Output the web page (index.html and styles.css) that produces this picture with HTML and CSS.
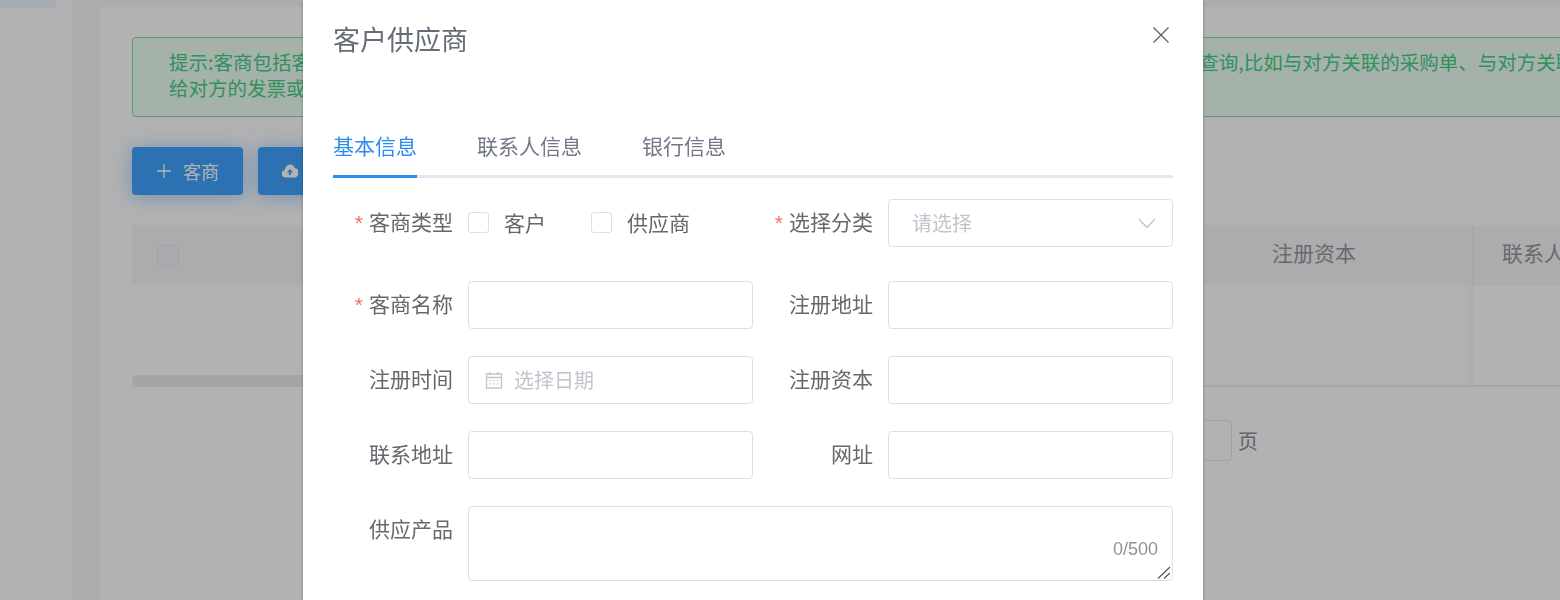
FILE: index.html
```html
<!DOCTYPE html>
<html lang="zh-CN">
<head>
<meta charset="utf-8">
<title>客户供应商</title>
<link rel="stylesheet" href="styles.css">
</head>
<body>
<div class="page">
  <aside class="sidebar"><div class="menu-active"></div></aside>
  <div class="gutter"></div>
  <main class="main">
    <div class="topband"></div>
    <div class="content">
      <div class="alert">
        <div class="alert-line">提示:客商包括客户和供应商,客商的基本信息和联系人信息都可以在这里维护,与客商相关联的其他各类业务数据信息可以查询,比如与对方关联的采购单、与对方关联的销售单</div>
        <div class="alert-line">给对方的发票或收到的发票</div>
      </div>
      <div class="toolbar">
        <button class="btn" type="button">
          <svg class="btn-plus" viewBox="0 0 16 16"><path d="M8 1v14M1 8h14"/></svg>
          <span>客商</span>
        </button>
        <button class="btn btn-upload" type="button">
          <svg class="btn-cloud" viewBox="0 0 16 14"><path fill-rule="evenodd" d="M8 0.5a4.8 4.8 0 0 1 4.6 3.6A4.6 4.6 0 0 1 12 13.4H3.8A3.7 3.7 0 0 1 3.1 6 4.9 4.9 0 0 1 8 0.5zM8 5 4.9 8.4H7V11h2V8.4h2.1z"/></svg>
          <span>导入客商</span>
        </button>
      </div>
      <div class="table">
        <div class="table-head">
          <div class="cell-check"><span class="box box-head"></span></div>
          <div class="cell-capital">注册资本</div>
          <div class="cell-contact">联系人</div>
        </div>
        <div class="table-body">
          <div class="body-fill"><div class="scrollbar"></div></div>
          <div class="body-capital"></div>
          <div class="body-contact"></div>
        </div>
      </div>
      <div class="pager">
        <span class="pager-box"></span>
        <span class="pager-text">页</span>
      </div>
    </div>
  </main>
</div>

<div class="overlay">
  <section class="dialog">
    <header class="dialog-head">
      <h2 class="dialog-title">客户供应商</h2>
      <svg class="dialog-close" viewBox="0 0 16 16"><path d="M0.5 0.5l15 15M15.5 0.5l-15 15"/></svg>
    </header>
    <nav class="tabs">
      <span class="tab tab-active">基本信息</span>
      <span class="tab">联系人信息</span>
      <span class="tab">银行信息</span>
    </nav>
    <form class="form">
      <div class="field field-first">
        <label class="label"><span class="star">*</span>客商类型</label>
        <div class="checks">
          <span class="check"><span class="box"></span>客户</span>
          <span class="check"><span class="box"></span>供应商</span>
        </div>
      </div>
      <div class="field field-first">
        <label class="label"><span class="star">*</span>选择分类</label>
        <div class="control">
          <input class="input input-select" type="text" placeholder="请选择" readonly>
          <svg class="select-arrow" viewBox="0 0 18 11"><path d="M1 1l8 8.5L17 1"/></svg>
        </div>
      </div>
      <div class="field">
        <label class="label"><span class="star">*</span>客商名称</label>
        <div class="control"><input class="input" type="text"></div>
      </div>
      <div class="field">
        <label class="label">注册地址</label>
        <div class="control"><input class="input" type="text"></div>
      </div>
      <div class="field">
        <label class="label">注册时间</label>
        <div class="control">
          <svg class="date-icon" viewBox="0 0 18 18"><path class="date-line" d="M1.5 3h15v14h-15zM1.5 6.5h15M5 1v3M13 1v3"/><path class="date-dots" d="M4.5 9.5h2M8 9.5h2M11.5 9.5h2M4.5 13h2M8 13h2M11.5 13h2"/></svg>
          <input class="input input-date" type="text" placeholder="选择日期">
        </div>
      </div>
      <div class="field">
        <label class="label">注册资本</label>
        <div class="control"><input class="input" type="text"></div>
      </div>
      <div class="field">
        <label class="label">联系地址</label>
        <div class="control"><input class="input" type="text"></div>
      </div>
      <div class="field">
        <label class="label">网址</label>
        <div class="control"><input class="input" type="text"></div>
      </div>
      <div class="field field-wide">
        <label class="label">供应产品</label>
        <div class="control">
          <textarea class="textarea"></textarea>
          <span class="counter">0/500</span>
          <svg class="grip" viewBox="0 0 14 13"><path d="M1 12.5 13 1M7 12.5 13 7"/></svg>
        </div>
      </div>
    </form>
  </section>
</div>
</body>
</html>
```

FILE: styles.css
```css
* { box-sizing: border-box; }

html, body {
  margin: 0;
  height: 100%;
  overflow: hidden;
  background: #fff;
}

body {
  font-family: "Noto Sans CJK SC", "Liberation Sans", sans-serif;
  color: #606266;
}

.page {
  display: flex;
  height: 600px;
  overflow: hidden;
}

.sidebar {
  flex: 0 0 72px;
  background: #fff;
}

.menu-active {
  width: 56px;
  height: 8px;
  border-radius: 0 0 4px 0;
  background: #ecf5ff;
}

.gutter {
  flex: 0 0 28px;
  background: #f6f6f7;
}

.main {
  flex: 1 1 auto;
  min-width: 0;
  overflow: hidden;
  background: #fff;
}

.topband {
  height: 7px;
  background: #f6f6f7;
}

.content {
  width: 1532px;
  padding: 30px 0 0 32px;
}

.alert {
  height: 80px;
  padding: 11px 36px;
  border: 1px solid #7fdca8;
  border-radius: 4px;
  background: #edfff3;
  color: #46d088;
  font-size: 19.5px;
  line-height: 26px;
}

.alert-line { white-space: nowrap; }

.toolbar {
  display: flex;
  gap: 15px;
  margin-top: 30px;
}

.btn {
  display: flex;
  align-items: center;
  gap: 11px;
  height: 48px;
  padding: 0 24px;
  border: 0;
  border-radius: 4px;
  background: #40a4ff;
  color: #fff;
  font: inherit;
  font-size: 18px;
  box-shadow: 0 2px 20px rgba(64, 158, 255, .5);
}

.btn-upload { width: 200px; }

.btn-plus {
  width: 16px;
  height: 16px;
  fill: none;
  stroke: #fff;
  stroke-width: 1.3;
}

.btn-cloud {
  width: 16px;
  height: 14px;
  fill: #fff;
}

.table {
  width: 1500px;
  margin-top: 30px;
}

.table-head {
  display: flex;
  align-items: center;
  height: 60px;
  background: #f5f6f8;
  font-size: 21px;
  line-height: 54px;
  color: #96989c;
}

.cell-check {
  flex: 1 1 auto;
  display: flex;
  align-items: center;
  padding-left: 25px;
}

.cell-capital {
  flex: 0 0 225px;
  height: 60px;
  padding-left: 25px;
}

.cell-contact {
  flex: 0 0 160px;
  height: 60px;
  padding-left: 29px;
  border-left: 1px solid #eeeff2;
}

.table-body {
  display: flex;
  height: 102px;
  border-bottom: 2px solid #edeef0;
}

.body-fill {
  flex: 1 1 auto;
  position: relative;
}

.scrollbar {
  position: absolute;
  left: 0;
  bottom: -2px;
  width: 400px;
  height: 12px;
  border-radius: 6px;
  background: #ececec;
}

.body-capital { flex: 0 0 225px; }

.body-contact {
  flex: 0 0 160px;
  border-left: 1px solid #f6f6f6;
  box-shadow: -6px 0 5px -2px rgba(0, 0, 0, .03);
}

.pager {
  display: flex;
  align-items: center;
  justify-content: flex-end;
  gap: 6px;
  width: 1500px;
  margin-top: 33px;
  padding-right: 374px;
}

.pager-box {
  width: 80px;
  height: 41px;
  border: 1px solid #e9e9ec;
  border-radius: 4px;
  background: #fff;
}

.pager-text {
  font-size: 20px;
  line-height: 41px;
  color: #8c8e92;
}

.overlay {
  position: fixed;
  inset: 0;
  display: flex;
  padding-left: 303px;
  overflow: hidden;
  background: rgba(0, 0, 0, .3);
}

.dialog {
  flex: 0 0 900px;
  height: 640px;
  padding: 0 30px;
  background: #fff;
  box-shadow: 0 1px 3px rgba(0, 0, 0, .3);
}

.dialog-head {
  position: relative;
  height: 119px;
  padding-top: 19px;
}

.dialog-title {
  margin: 0;
  font-size: 27px;
  font-weight: 400;
  line-height: 40px;
  color: #666d78;
}

.dialog-close {
  position: absolute;
  top: 27px;
  right: 4px;
  width: 16px;
  height: 16px;
  fill: none;
  stroke: #606266;
  stroke-width: 1.3;
}

.tabs {
  display: flex;
  gap: 60px;
  height: 59px;
  border-bottom: 3px solid #e4e7ed;
}

.tab {
  height: 59px;
  font-size: 21px;
  line-height: 52px;
  color: #73788a;
}

.tab-active {
  border-bottom: 3px solid #2d8cf0;
  color: #2d8cf0;
}

.form {
  display: grid;
  grid-template-columns: 420px 420px;
  row-gap: 27px;
  padding-top: 21px;
}

.field {
  display: flex;
  height: 48px;
}

.field-first { margin-bottom: 7px; }

.field-wide {
  grid-column: 1 / 3;
  height: 75px;
}

.label {
  flex: 0 0 120px;
  height: 48px;
  margin-right: 15px;
  text-align: right;
  font-size: 21px;
  line-height: 44px;
  color: #66686d;
}

.star {
  margin-right: 6px;
  color: #f56c6c;
  font-family: "Liberation Sans", sans-serif;
  font-size: 21px;
  line-height: 1;
}

.checks {
  display: flex;
  align-items: center;
  gap: 45px;
  height: 46px;
}

.check {
  display: flex;
  align-items: center;
  gap: 15px;
  font-size: 21px;
  line-height: 30px;
  color: #66686d;
}

.box {
  display: block;
  width: 21px;
  height: 21px;
  border: 1px solid #dcdfe6;
  border-radius: 3px;
  background: #fff;
}

.box-head {
  width: 22px;
  border-color: #eaeaef;
  background: #f4f5fa;
}

.control {
  position: relative;
  flex: 1 1 auto;
  min-width: 0;
}

.input {
  display: block;
  width: 100%;
  height: 48px;
  padding: 0 23px 2px;
  border: 1px solid #dcdfe6;
  border-radius: 4px;
  outline: 0;
  background: #fff;
  font-family: inherit;
  font-size: 20px;
  color: #606266;
}

.input::placeholder { color: #c0c4cc; opacity: 1; }

.input-date { padding-left: 45px; }

.date-icon {
  position: absolute;
  top: 15px;
  left: 17px;
  width: 18px;
  height: 18px;
  fill: none;
  stroke: #c0c4cc;
}

.date-line { stroke-width: 1.3; }

.date-dots { stroke-width: 1.2; }

.select-arrow {
  position: absolute;
  top: 19px;
  right: 17px;
  width: 18px;
  height: 11px;
  fill: none;
  stroke: #c0c4cc;
  stroke-width: 1.3;
}

.textarea {
  display: block;
  width: 100%;
  height: 75px;
  padding: 8px 23px;
  border: 1px solid #dcdfe6;
  border-radius: 4px;
  outline: 0;
  resize: none;
  background: #fff;
  font-family: inherit;
  font-size: 20px;
}

.counter {
  position: absolute;
  right: 15px;
  top: 32px;
  font-family: "Liberation Sans", sans-serif;
  font-size: 18px;
  line-height: 22px;
  color: #909399;
}

.grip {
  position: absolute;
  right: 2px;
  bottom: 2px;
  width: 14px;
  height: 13px;
  fill: none;
  stroke: #555;
  stroke-width: 1.2;
}
```
